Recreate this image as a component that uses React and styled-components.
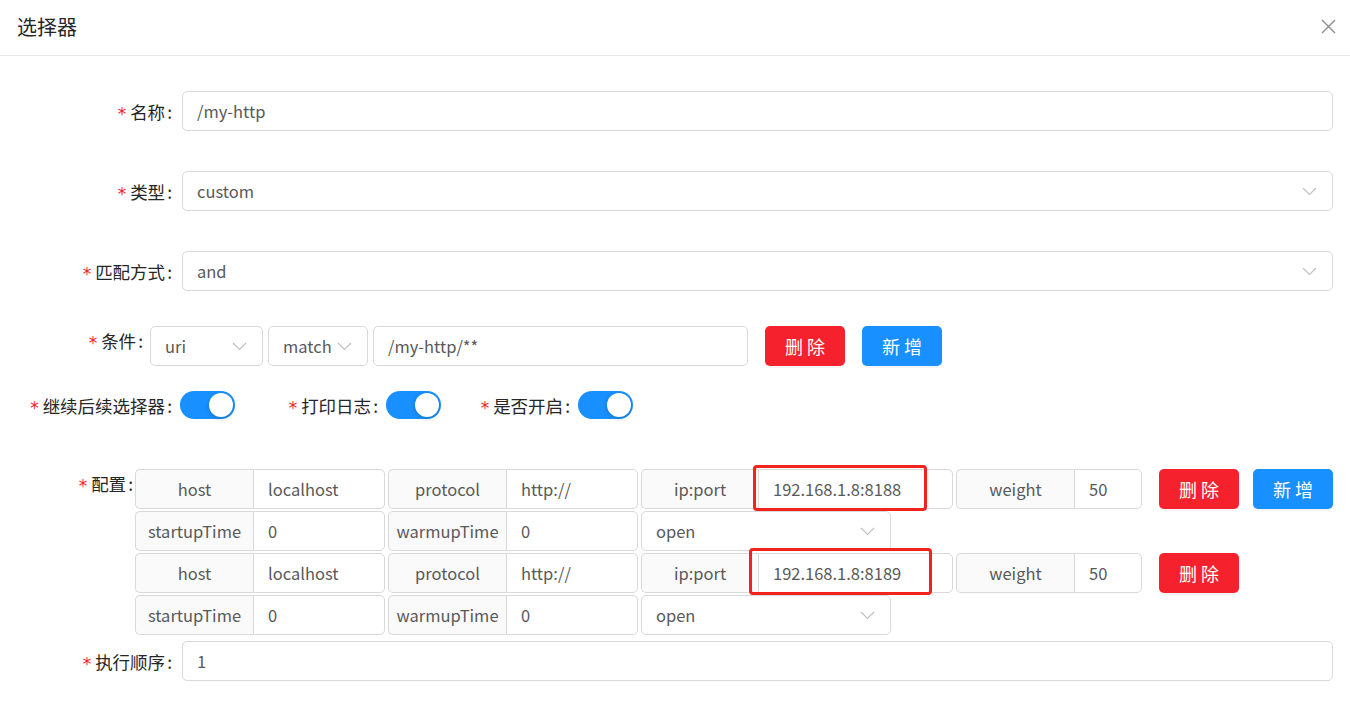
import styled, { createGlobalStyle } from "styled-components";

const GlobalStyle = createGlobalStyle`
    body{
        margin: 0;
        background: #fff;
        font-family: "Noto Sans CJK SC", "Noto Sans", sans-serif;
    }
`;

const Modal = styled.div`
    width: 1350px;
    min-height: 714px;
    background: #fff;
    color: #262626;
`;

const Header = styled.div`
    height: 56px;
    box-sizing: border-box;
    border-bottom: 1px solid #e8e8e8;
    display: flex;
    align-items: center;
    justify-content: space-between;
    padding: 0 14px 2px 17px;
    .title{
        font-size: 20px;
        color: #262626;
        line-height: 24px;
    }
`;

const CloseBtn = styled.button`
    border: 0;
    background: transparent;
    padding: 0;
    width: 16px;
    height: 16px;
    display: flex;
    align-items: center;
    justify-content: center;
    cursor: pointer;
`;

const Body = styled.div`
    display: flex;
    flex-direction: column;
    padding: 35px 17px 0 0;
`;

const FormRow = styled.div`
    display: flex;
    align-items: ${props => props.$top ? "flex-start" : "center"};
    margin-top: ${props => props.$mt || 0}px;
    height: ${props => props.$auto ? "auto" : "40px"};
`;

const Label = styled.label`
    width: ${props => props.$w}px;
    height: ${props => props.$lh || 40}px;
    flex-shrink: 0;
    box-sizing: border-box;
    display: flex;
    align-items: center;
    justify-content: flex-end;
    font-size: 17.5px;
    color: #262626;
    white-space: nowrap;
    &::after{
        content: ":";
        margin: 0 ${props => props.$after}px 0 2px;
    }
    .req{
        display: inline-block;
        color: #f5222d;
        font-family: "DejaVu Sans", sans-serif;
        font-size: 17px;
        line-height: 1;
        margin-right: 4px;
        transform: translateY(3px);
    }
`;

const TextInput = styled.input`
    width: ${props => props.$w ? props.$w + "px" : "auto"};
    flex: ${props => props.$w ? "none" : 1};
    height: 40px;
    box-sizing: border-box;
    border: 1px solid #d9d9d9;
    border-radius: 5px;
    padding: 0 14px;
    margin-left: ${props => props.$ml || 0}px;
    font: inherit;
    font-size: 16.5px;
    color: #595959;
    background: #fff;
    outline: none;
`;

const Select = styled.div`
    width: ${props => props.$w ? props.$w + "px" : "auto"};
    flex: ${props => props.$w ? "none" : 1};
    height: 40px;
    box-sizing: border-box;
    border: 1px solid #d9d9d9;
    border-radius: 5px;
    padding: 0 15px 0 14px;
    margin-left: ${props => props.$ml || 0}px;
    display: flex;
    align-items: center;
    justify-content: space-between;
    font-size: 16.5px;
    color: #595959;
    background: #fff;
`;

const Button = styled.button`
    width: 80px;
    height: 40px;
    flex-shrink: 0;
    border: 0;
    border-radius: 5px;
    background: ${props => props.$danger ? "#f5222d" : "#1890ff"};
    color: #fff;
    font-family: inherit;
    font-size: 18px;
    box-shadow: 0 2px 0 rgba(0,0,0,0.045);
    margin-left: ${props => props.$ml || 0}px;
    cursor: pointer;
`;

const ToggleItem = styled.div`
    display: flex;
    align-items: center;
`;

const Switch = styled.button`
    width: 55px;
    height: 28px;
    border: 0;
    border-radius: 14px;
    background: #1890ff;
    padding: 2px;
    display: flex;
    justify-content: flex-end;
    box-sizing: border-box;
    cursor: pointer;
    span{
        width: 24px;
        height: 24px;
        border-radius: 50%;
        background: #fff;
        box-shadow: 0 2px 4px rgba(0,35,11,0.2);
    }
`;

const ConfigRows = styled.div`
    display: flex;
    flex-direction: column;
    gap: 2px;
`;

const ConfigRow = styled.div`
    display: flex;
    align-items: center;
    gap: 3px;
    height: 40px;
`;

const Group = styled.div`
    position: relative;
    display: flex;
    width: ${props => props.$w}px;
    height: 40px;
    flex-shrink: 0;
    .addon{
        width: ${props => props.$aw}px;
        flex-shrink: 0;
        box-sizing: border-box;
        border: 1px solid #d9d9d9;
        border-right: 0;
        border-radius: 5px 0 0 5px;
        background: #fafafa;
        display: flex;
        align-items: center;
        justify-content: center;
        font-size: 16.5px;
        color: #595959;
        white-space: nowrap;
    }
    input{
        flex: 1;
        min-width: 0;
        height: 40px;
        box-sizing: border-box;
        border: 1px solid #d9d9d9;
        border-radius: 0 5px 5px 0;
        padding: 0 14px;
        font: inherit;
        font-size: 16.5px;
        color: #595959;
        outline: none;
    }
`;

const Highlight = styled.div`
    position: absolute;
    left: ${props => props.$l}px;
    top: ${props => props.$t}px;
    width: ${props => props.$w}px;
    height: ${props => props.$h}px;
    box-sizing: border-box;
    border: 3px solid #f2231c;
    border-radius: 4px;
    pointer-events: none;
`;

function Arrow(){
    return (
        <svg width="15" height="9" viewBox="0 0 15 9">
            <polyline points="1,1 7.5,7.5 14,1" fill="none" stroke="#bfbfbf" strokeWidth="1.1"/>
        </svg>
    )
}

function ReqLabel({ w, after, lh, children }){
    return (
        <Label $w={w} $after={after} $lh={lh}>
            <span className="req">*</span>{children}
        </Label>
    )
}

function AddonInput({ w, aw, addon, value, mark }){
    return (
        <Group $w={w} $aw={aw}>
            <div className="addon">{addon}</div>
            <input readOnly defaultValue={value}/>
            {mark && <Highlight $l={mark.l} $t={mark.t} $w={mark.w} $h={mark.h}/>}
        </Group>
    )
}

function Upstream({ mark, first }){
    return (
        <>
            <ConfigRow>
                <AddonInput w={250} aw={118} addon="host" value="localhost"/>
                <AddonInput w={250} aw={118} addon="protocol" value="http://"/>
                <AddonInput w={312} aw={117} addon="ip:port" value={first ? "192.168.1.8:8188" : "192.168.1.8:8189"} mark={mark}/>
                <AddonInput w={186} aw={118} addon="weight" value="50"/>
                <Button $danger $ml={14}>删 除</Button>
                {first && <Button $ml={11}>新 增</Button>}
            </ConfigRow>
            <ConfigRow>
                <AddonInput w={250} aw={118} addon="startupTime" value="0"/>
                <AddonInput w={250} aw={118} addon="warmupTime" value="0"/>
                <Select $w={250}>open<Arrow/></Select>
            </ConfigRow>
        </>
    )
}

export default function App(){
    return (
        <Modal>
            <GlobalStyle/>
            <Header>
                <span className="title">选择器</span>
                <CloseBtn aria-label="close">
                    <svg width="15" height="15" viewBox="0 0 15 15">
                        <path d="M1 1 L14 14 M14 1 L1 14" stroke="#8c8c8c" strokeWidth="1.4" fill="none"/>
                    </svg>
                </CloseBtn>
            </Header>
            <Body>
                <FormRow>
                    <ReqLabel w={182} after={10}>名称</ReqLabel>
                    <TextInput readOnly defaultValue="/my-http"/>
                </FormRow>
                <FormRow $mt={40}>
                    <ReqLabel w={182} after={10}>类型</ReqLabel>
                    <Select>custom<Arrow/></Select>
                </FormRow>
                <FormRow $mt={40}>
                    <ReqLabel w={182} after={10}>匹配方式</ReqLabel>
                    <Select>and<Arrow/></Select>
                </FormRow>
                <FormRow $mt={35} $top>
                    <ReqLabel w={150} after={7} lh={28}>条件</ReqLabel>
                    <Select $w={113}>uri<Arrow/></Select>
                    <Select $w={100} $ml={5}>match<Arrow/></Select>
                    <TextInput $w={375} $ml={5} readOnly defaultValue="/my-http/**"/>
                    <Button $danger $ml={17}>删 除</Button>
                    <Button $ml={17}>新 增</Button>
                </FormRow>
                <FormRow $mt={19}>
                    <ToggleItem>
                        <ReqLabel w={180} after={8}>继续后续选择器</ReqLabel>
                        <Switch><span/></Switch>
                    </ToggleItem>
                    <ToggleItem>
                        <ReqLabel w={151} after={8}>打印日志</ReqLabel>
                        <Switch><span/></Switch>
                    </ToggleItem>
                    <ToggleItem>
                        <ReqLabel w={137} after={8}>是否开启</ReqLabel>
                        <Switch><span/></Switch>
                    </ToggleItem>
                </FormRow>
                <FormRow $mt={44} $top $auto>
                    <ReqLabel w={135} after={2} lh={28}>配置</ReqLabel>
                    <ConfigRows>
                        <Upstream first mark={{ l: 112, t: -4, w: 174, h: 46 }}/>
                        <Upstream mark={{ l: 108, t: -5, w: 183, h: 47 }}/>
                    </ConfigRows>
                </FormRow>
                <FormRow $mt={6}>
                    <ReqLabel w={182} after={10}>执行顺序</ReqLabel>
                    <TextInput readOnly defaultValue="1"/>
                </FormRow>
            </Body>
        </Modal>
    )
}
